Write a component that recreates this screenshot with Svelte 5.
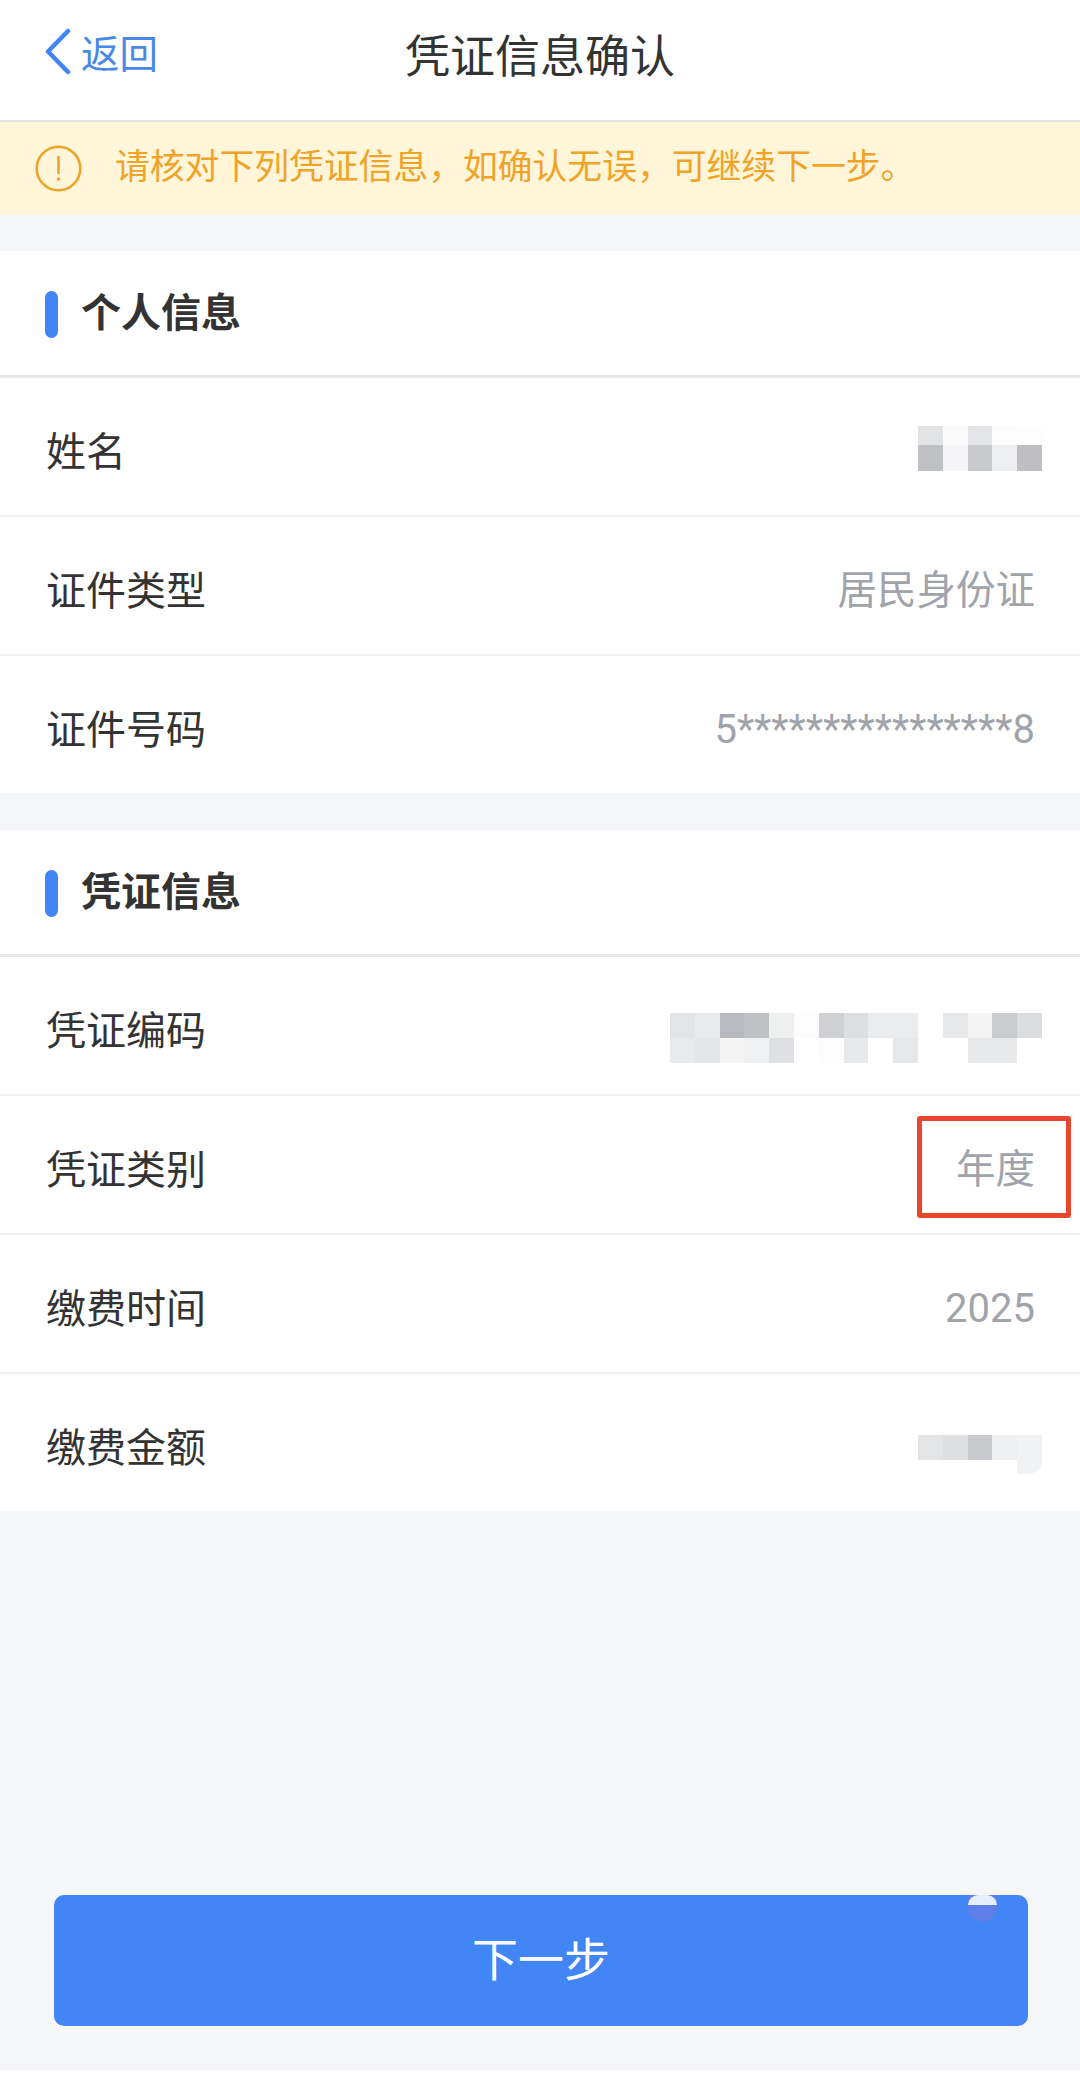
<script>
	const notice = '请核对下列凭证信息\uFF0C如确认无误\uFF0C可继续下一步。';

	// blurred values in the screenshot, one colour per mosaic cell
	const nameBlur = [
		['#e2e3e5', '#fafafa', '#e3e4e7', '#fcfcfc', '#fdfdfd'],
		['#c0c1c5', '#f5f5f7', '#c8c9cd', '#eeeff1', '#bebec3']
	];
	const codeBlur = [
		['#e3e4e6', '#e9eaec', '#b9babf', '#c0c1c5', '#eef0ef', '#fcfcfc', '#cfd0d4', '#dddee0', '#ebecee', '#ebecee', '#fff', '#e6e7e9', '#f4f4f5', '#cbccd0', '#dbdcde'],
		['#e9eaeb', '#e5e6e8', '#f4f4f5', '#eff0f1', '#dfe0e3', '#fff', '#fcfcfc', '#e8e9ea', '#fff', '#e6e7e9', '#fff', '#fff', '#e8e9ea', '#e8e9ea', '#fff']
	];
	const amountBlur = [['#e3e4e6', '#dddee0', '#c8c9cd', '#eeeff1', '#f1f2f3']];

	const sections = [
		{
			title: '个人信息',
			rows: [
				{ label: '姓名', blur: nameBlur, short: true },
				{ label: '证件类型', value: '居民身份证' },
				{ label: '证件号码', value: '5****************8', num: true }
			]
		},
		{
			title: '凭证信息',
			rows: [
				{ label: '凭证编码', blur: codeBlur, low: true },
				{ label: '凭证类别', value: '年度', marked: true },
				{ label: '缴费时间', value: '2025', num: true },
				{ label: '缴费金额', blur: amountBlur, tail: true }
			]
		}
	];
</script>

<main>
	<header>
		<button class="back">
			<svg width="27" height="47" viewBox="0 0 27 47">
				<path d="M24 3 L4 23.5 L24 44" fill="none" stroke="#4285f4" stroke-width="4.5" stroke-linecap="round" stroke-linejoin="round" />
			</svg>
			<span>返回</span>
		</button>
		<h1>凭证信息确认</h1>
	</header>

	<div class="notice">
		<svg width="47" height="47" viewBox="0 0 47 47">
			<circle cx="23.5" cy="23.5" r="21.8" fill="none" stroke="#efa327" stroke-width="2.6" />
			<path d="M23.5 12 V28" stroke="#efa327" stroke-width="2.6" stroke-linecap="round" />
			<circle cx="23.5" cy="34" r="1.8" fill="#efa327" />
		</svg>
		<span>{notice}</span>
	</div>

	{#each sections as section}
		<section>
			<h2><i></i>{section.title}</h2>
			{#each section.rows as row}
				<div class="row">
					<span class="label">{row.label}</span>
					{#if row.blur}
						<div class="blur" class:low={row.low} class:tail={row.tail} class:short={row.short}>
							{#each row.blur as cells}
								<div class="blur-line">
									{#each cells as c}
										<b style="background: {c}"></b>
									{/each}
								</div>
							{/each}
						</div>
					{:else}
						<span class="value" class:num={row.num}>{row.value}</span>
					{/if}
					{#if row.marked}
						<div class="mark"></div>
					{/if}
				</div>
			{/each}
		</section>
	{/each}

	<footer>
		<button class="next">
			<span class="next-text">下一步</span>
			<span class="dot"></span>
		</button>
	</footer>
</main>

<style>
	:global(body) {
		margin: 0;
		background: #f4f6fa;
	}

	main {
		height: 2078px;
		display: flex;
		flex-direction: column;
		overflow: hidden;
		background: #f4f6fa;
		font-family: "Noto Sans CJK SC", "Noto Sans", sans-serif;
		color: #333;
	}

	header {
		box-sizing: border-box;
		height: 122px;
		padding-bottom: 12px;
		display: flex;
		align-items: center;
		justify-content: center;
		position: relative;
		background: #fff;
		border-bottom: 2px solid #e6e6e8;
	}

	h1 {
		margin: 0;
		font-size: 45px;
		font-weight: 400;
		line-height: 60px;
	}

	.back {
		position: absolute;
		left: 44px;
		top: 26px;
		padding: 0;
		border: 0;
		background: none;
		display: flex;
		align-items: center;
		gap: 10px;
		font: inherit;
		font-size: 38.5px;
		line-height: 50px;
		color: #4a88e8;
	}

	.notice {
		box-sizing: border-box;
		height: 93px;
		padding-left: 35px;
		display: flex;
		align-items: center;
		gap: 33px;
		background: #fff5d9;
		color: #efa327;
		font-size: 34.8px;
	}

	.notice span {
		position: relative;
		top: -5px;
	}

	section {
		margin-top: 36px;
		background: #fff;
	}

	section + section {
		margin-top: 37px;
	}

	h2 {
		box-sizing: border-box;
		height: 127px;
		margin: 0;
		padding: 0 0 6px 45px;
		display: flex;
		align-items: center;
		gap: 23px;
		font-size: 40px;
		font-weight: 700;
		border-bottom: 3px solid #e6e7ea;
	}

	h2 i {
		width: 13px;
		height: 47px;
		margin-top: 8px;
		border-radius: 7px;
		background: #4285f4;
	}

	.row {
		box-sizing: border-box;
		height: 139px;
		padding: 0 45px 0 46px;
		display: flex;
		align-items: center;
		justify-content: space-between;
		position: relative;
		border-bottom: 2px solid #f1f2f5;
	}

	.row:last-child {
		height: 137px;
		border-bottom: 0;
	}

	.label {
		font-size: 40px;
		position: relative;
		top: 2px;
	}

	.value {
		font-family: Roboto, "Noto Sans CJK SC", sans-serif;
		font-size: 39.5px;
		color: #a0a3aa;
		position: relative;
		top: 1px;
	}

	.value.num {
		font-size: 40px;
		top: 5px;
	}

	.blur {
		margin-right: -7px;
		display: flex;
		flex-direction: column;
	}

	.blur.low {
		margin-top: 25px;
	}

	.blur.short {
		margin-top: 4px;
	}

	.blur.short .blur-line:first-child b {
		height: 19px;
	}

	.blur.tail {
		margin-top: 24px;
		padding-bottom: 14px;
		position: relative;
	}

	.blur.tail::after {
		content: '';
		position: absolute;
		right: 0;
		bottom: 0;
		width: 25px;
		height: 14px;
		background: #f1f2f3;
		border-bottom-right-radius: 16px 10px;
	}

	.blur-line {
		display: flex;
	}

	.blur-line b {
		width: 24.8px;
		height: 25.2px;
	}

	.mark {
		position: absolute;
		box-sizing: border-box;
		right: 9px;
		top: 20px;
		width: 154px;
		height: 102px;
		border: 5px solid #e8472d;
		border-radius: 3px;
	}

	footer {
		margin-top: auto;
		box-sizing: border-box;
		height: 183px;
		padding: 0 52px 44px 54px;
		display: flex;
		border-bottom: 8px solid #fff;
	}

	.next {
		flex: 1;
		height: 131px;
		padding: 0;
		border: 0;
		border-radius: 10px;
		position: relative;
		overflow: hidden;
		background: #4285f4;
		color: #fff;
		font: inherit;
		font-size: 46px;
	}

	.next-text {
		position: relative;
		top: -5px;
	}

	.dot {
		position: absolute;
		right: 31px;
		top: 0;
		width: 29px;
		height: 27px;
		border-radius: 0 0 15px 15px;
		background: #5f7fe8;
	}

	.dot::before {
		content: '';
		position: absolute;
		left: 0;
		top: 0;
		width: 29px;
		height: 10px;
		background: #e3f0fb;
		border-radius: 12px 12px 0 0;
	}
</style>
